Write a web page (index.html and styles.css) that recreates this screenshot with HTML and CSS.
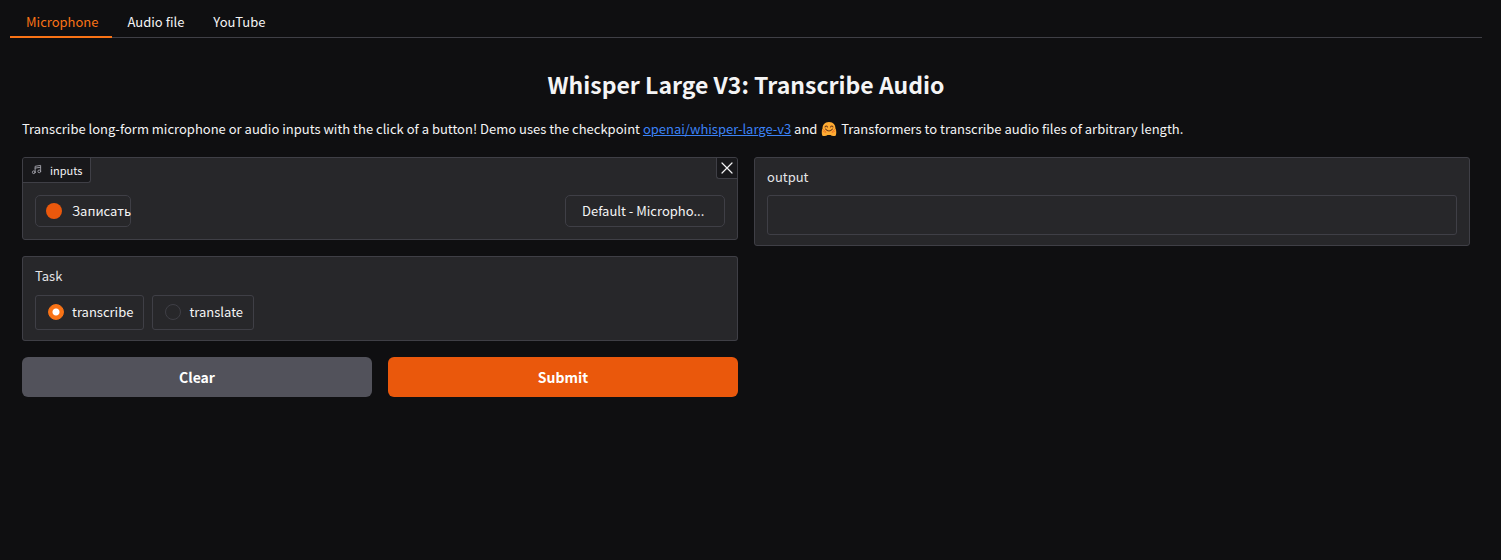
FILE: index.html
```html
<!DOCTYPE html>
<html lang="en">
<head>
<meta charset="utf-8">
<meta name="viewport" content="width=device-width, initial-scale=1">
<title>Whisper Large V3: Transcribe Audio</title>
<link rel="stylesheet" href="styles.css">
</head>
<body>
<div class="app">
  <nav class="tabs" role="tablist">
    <button class="tab tab-selected" role="tab" aria-selected="true">Microphone</button>
    <button class="tab" role="tab" aria-selected="false">Audio file</button>
    <button class="tab" role="tab" aria-selected="false">YouTube</button>
  </nav>
  <main class="panel">
    <h1 class="title">Whisper Large V3: Transcribe Audio</h1>
    <p class="description">Transcribe long-form microphone or audio inputs with the click of a button! Demo uses the checkpoint <a class="link" href="#">openai/whisper-large-v3</a> and <svg class="hug" viewBox="0 0 32 32" role="img" aria-label="hugging face"><path d="M16 2C7 2 3 8 3 15.500C1 18 1 27 3 29.500C5 31 11 30 13 28H19C21 30 27 31 29 29.500C31 27 31 18 29 15.500C29 8 25 2 16 2Z" fill="#ffac33"/><path d="M4 20L9 23M5 17L10 22M28 20L23 23M27 17L22 22" stroke="#f27c28" stroke-width="2" stroke-linecap="round"/><path d="M8 12Q10.500 8 13 12M19 12Q21.500 8 24 12M9 16Q16 24 23 16" fill="none" stroke="#713b19" stroke-width="2.200" stroke-linecap="round"/></svg> Transformers to transcribe audio files of arbitrary length.</p>
    <div class="columns">
      <div class="column">
        <section class="block audio">
          <div class="block-label"><svg class="note" viewBox="0 0 24 24" fill="none" stroke="currentColor" stroke-width="2" stroke-linecap="round" stroke-linejoin="round" aria-hidden="true"><path d="M9 18V5l12-2v13M9 9l12-2"/><circle cx="6" cy="18" r="3"/><circle cx="18" cy="16" r="3"/></svg><span>inputs</span></div>
          <button class="close" aria-label="Clear audio"><svg class="cross" viewBox="0 0 12 12" fill="none" stroke="currentColor" stroke-width="1.200" stroke-linecap="round"><path d="M1 1L11 11M11 1L1 11"/></svg></button>
          <div class="controls">
            <button class="record"><span class="record-dot"></span>Записать</button>
            <select class="device" aria-label="Input device"><option>Default - Micropho...</option></select>
          </div>
        </section>
        <fieldset class="block task">
          <legend class="field-label">Task</legend>
          <div class="choices">
            <label class="choice"><input class="radio" type="radio" name="task" checked><span>transcribe</span></label>
            <label class="choice"><input class="radio" type="radio" name="task"><span>translate</span></label>
          </div>
        </fieldset>
        <div class="actions">
          <button class="action">Clear</button>
          <button class="action action-primary">Submit</button>
        </div>
      </div>
      <div class="column">
        <section class="block output">
          <label class="field-label" for="output">output</label>
          <textarea class="output-text" id="output" rows="1" readonly></textarea>
        </section>
      </div>
    </div>
  </main>
</div>
</body>
</html>
```
FILE: styles.css
```css
* {
  box-sizing: border-box;
}

body {
  margin: 0;
  background: #0f0f11;
  color: #f4f4f5;
  font: 400 13px/20px "Noto Sans CJK SC", "Noto Sans", sans-serif;
}

button,
select,
textarea {
  margin: 0;
  color: inherit;
  font: inherit;
  cursor: pointer;
}

.app {
  padding: 7px 19px 0 10px;
}

.tabs {
  display: flex;
  border-bottom: 1px solid #3f3f46;
}

.tab {
  margin-bottom: -1px;
  padding: 5px 13px 4px 16px;
  border: 0;
  border-bottom: 2px solid transparent;
  background: none;
}

.tab-selected {
  border-color: #f97316;
  color: #f97316;
}

.panel {
  padding: 29px 12px 12px;
}

.title {
  margin: 0 0 18px;
  font-size: 23px;
  line-height: 34px;
  font-weight: 600;
  text-align: center;
}

.description {
  margin: 0 0 18px;
}

.link {
  color: #3b82f6;
  text-decoration: underline;
}

.hug {
  width: 16px;
  height: 16px;
  margin: 0 1px;
  vertical-align: -3px;
}

.columns {
  display: grid;
  grid-template-columns: 1fr 1fr;
  align-items: start;
  gap: 16px;
}

.column {
  display: flex;
  flex-direction: column;
  gap: 16px;
  min-width: 0;
}

.block {
  position: relative;
  min-width: 0;
  margin: 0;
  border: 1px solid #3f3f46;
  border-radius: 3px;
  background: #27272a;
}

.block-label {
  display: inline-flex;
  align-items: center;
  gap: 8px;
  height: 25px;
  padding: 0 8px 1px;
  border: solid #3f3f46;
  border-width: 0 1px 1px 0;
  border-radius: 2px 0 3px;
  background: #18181b;
  font-size: 11px;
  vertical-align: top;
}

.note {
  width: 11px;
  height: 11px;
  color: #a1a1aa;
}

.close {
  position: absolute;
  top: 0;
  right: 0;
  display: flex;
  align-items: center;
  justify-content: center;
  width: 21px;
  height: 21px;
  padding: 0;
  border: solid #3f3f46;
  border-width: 0 0 1px 1px;
  border-radius: 0 2px 0 3px;
  background: #18181b;
}

.cross {
  width: 12px;
  height: 12px;
}

.controls {
  display: flex;
  justify-content: space-between;
  padding: 12px;
}

.record,
.device {
  height: 32px;
  border: 1px solid #3f3f46;
  border-radius: 5px;
  background: #27272a;
}

.record {
  display: flex;
  align-items: center;
  gap: 10px;
  width: 96px;
  padding: 0 0 0 10px;
  white-space: nowrap;
}

.record-dot {
  flex: none;
  width: 16px;
  height: 16px;
  border-radius: 50%;
  background: #ea580c;
}

.device {
  appearance: none;
  width: 160px;
  padding: 0 16px;
}

.task {
  padding: 10px 12px;
}

.field-label {
  display: block;
  padding: 0;
  color: #e4e4e7;
  line-height: 18px;
}

.task .field-label {
  float: left;
  width: 100%;
  margin-bottom: 10px;
}

.choices {
  display: flex;
  clear: both;
  gap: 8px;
}

.choice {
  display: flex;
  align-items: center;
  gap: 8px;
  height: 35px;
  padding: 0 10px 1px 12px;
  border: 1px solid #3f3f46;
  border-radius: 3px;
  cursor: pointer;
}

.radio {
  appearance: none;
  width: 16px;
  height: 16px;
  margin: 0;
  border: 1px solid #3f3f46;
  border-radius: 50%;
}

.radio:checked {
  border-color: #f97316;
  background: radial-gradient(circle, #fff 0 3px, #f97316 4px);
}

.actions {
  display: grid;
  grid-template-columns: 1fr 1fr;
  gap: 16px;
}

.action {
  height: 40px;
  border: 0;
  border-radius: 6px;
  background: #52525b;
  color: #fff;
  font-size: 14px;
  font-weight: 600;
}

.action-primary {
  background: #ea580c;
}

.output {
  padding: 10px 12px;
}

.output-text {
  display: block;
  width: 100%;
  height: 40px;
  margin-top: 9px;
  padding: 9px;
  border: 1px solid #3f3f46;
  border-radius: 3px;
  background: #27272a;
  resize: none;
}
```
